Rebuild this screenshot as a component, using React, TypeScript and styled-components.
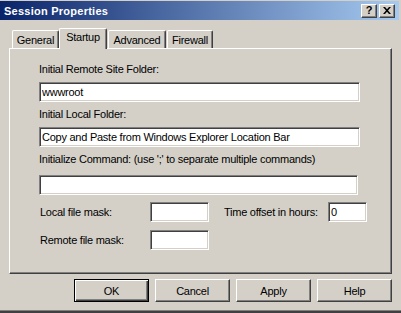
import React from "react";
import styled, { createGlobalStyle } from "styled-components";

const GlobalStyle = createGlobalStyle`
  html, body { margin: 0; padding: 0; background: #d4d0c8; }
  body {
    font-family: "Liberation Sans", Arial, sans-serif;
    font-size: 11px;
    letter-spacing: -0.25px;
    color: #000;
  }
  * { box-sizing: border-box; }
`;

const Window = styled.div`
  width: 401px;
  height: 313px;
  background: #d4d0c8;
  display: flex;
  flex-direction: column;
  padding-top: 1px;
  box-shadow: inset 0 -2px 0 #404040, inset 0 -3px 0 #808080;
`;

const TitleBar = styled.div`
  height: 19px;
  margin-right: 2px;
  padding: 0 4px 0 4px;
  background: linear-gradient(to right, #0a246a, #a6caf0);
  display: flex;
  align-items: center;
`;

const Title = styled.span`
  color: #fff;
  font-weight: bold;
  font-size: 11px;
  letter-spacing: 0.25px;
  flex: 1;
`;

const CaptionButton = styled.div<{ $gap?: number }>`
  width: 16px;
  height: 14px;
  margin-left: ${(p) => p.$gap ?? 0}px;
  background: #d4d0c8;
  border: 1px solid;
  border-color: #fff #404040 #404040 #fff;
  box-shadow: inset -1px -1px 0 #808080;
  display: flex;
  align-items: center;
  justify-content: center;
  font-weight: bold;
  font-size: 11px;
  letter-spacing: 0;
  line-height: 1;
  color: #000;
`;

const TabRow = styled.div`
  margin-top: 8px;
  height: 20px;
  padding-left: 12px;
  display: flex;
  align-items: flex-end;
`;

const Tab = styled.div<{ $w: number; $active?: boolean; $ml?: number }>`
  position: relative;
  z-index: ${(p) => (p.$active ? 2 : 1)};
  width: ${(p) => p.$w}px;
  height: ${(p) => (p.$active ? 21 : 18)}px;
  margin-left: ${(p) => p.$ml ?? 0}px;
  margin-bottom: ${(p) => (p.$active ? -1 : 0)}px;
  padding-top: ${(p) => (p.$active ? 2 : 3)}px;
  background: #d4d0c8;
  border-left: 1px solid #fff;
  border-top: 1px solid #fff;
  border-right: 1px solid #404040;
  border-radius: 2px 2px 0 0;
  box-shadow: inset -1px 0 0 #808080;
  text-align: center;
  line-height: 13px;
`;

const Panel = styled.div`
  margin: 0 9px;
  height: 226px;
  border-left: 1px solid #fff;
  border-top: 1px solid #fff;
  border-right: 1px solid #404040;
  border-bottom: 1px solid #404040;
  box-shadow: inset -1px -1px 0 #808080;
  padding: 14px 0 0 29px;
  display: flex;
  flex-direction: column;
`;

const Label = styled.div<{ $mt?: number }>`
  height: 13px;
  line-height: 13px;
  margin-top: ${(p) => p.$mt ?? 0}px;
  white-space: nowrap;
`;

const TextBox = styled.input<{ $w: number; $mt?: number }>`
  display: block;
  width: ${(p) => p.$w}px;
  height: 20px;
  margin: ${(p) => p.$mt ?? 0}px 0 0 0;
  padding: 0 0 0 2px;
  border: 1px solid;
  border-color: #808080 #fff #fff #808080;
  box-shadow: inset 1px 1px 0 #404040, inset -1px -1px 0 #d4d0c8;
  background: #fff;
  font-family: "Liberation Sans", Arial, sans-serif;
  font-size: 11px;
  letter-spacing: -0.25px;
  color: #000;
  outline: none;
`;

const FieldRow = styled.div<{ $mt: number }>`
  margin-top: ${(p) => p.$mt}px;
  display: flex;
  align-items: center;
`;

const RowLabel = styled.div<{ $w: number; $ml?: number }>`
  width: ${(p) => p.$w}px;
  margin-left: ${(p) => p.$ml ?? 0}px;
  line-height: 13px;
  white-space: nowrap;
  padding-left: 1px;
`;

const ButtonRow = styled.div`
  margin-top: 5px;
  padding-right: 9px;
  display: flex;
  justify-content: flex-end;
  gap: 6px;
`;

const Button = styled.button<{ $default?: boolean }>`
  width: 75px;
  height: 23px;
  margin: 0;
  padding: 0;
  background: #d4d0c8;
  font-family: "Liberation Sans", Arial, sans-serif;
  font-size: 11px;
  letter-spacing: -0.25px;
  color: #000;
  border: 1px solid;
  border-color: ${(p) => (p.$default ? "#000" : "#fff #404040 #404040 #fff")};
  box-shadow: ${(p) =>
    p.$default
      ? "inset 1px 1px 0 #fff, inset -1px -1px 0 #404040, inset -2px -2px 0 #808080"
      : "inset -1px -1px 0 #808080"};
`;

export default function App() {
  return (
    <>
      <GlobalStyle />
      <Window>
        <TitleBar>
          <Title>Session Properties</Title>
          <CaptionButton>?</CaptionButton>
          <CaptionButton $gap={2}>
            <svg width="8" height="7" viewBox="0 0 8 7">
              <path d="M0 0h2l2 2.2L6 0h2L5 3.5 8 7H6L4 4.8 2 7H0l3-3.5z" fill="#000" />
            </svg>
          </CaptionButton>
        </TitleBar>
        <TabRow>
          <Tab $w={47}>General</Tab>
          <Tab $w={48} $active>
            Startup
          </Tab>
          <Tab $w={58} $ml={1}>
            Advanced
          </Tab>
          <Tab $w={46} $ml={1}>
            Firewall
          </Tab>
        </TabRow>
        <Panel>
          <Label>Initial Remote Site Folder:</Label>
          <TextBox $w={321} $mt={6} readOnly defaultValue="wwwroot" />
          <Label $mt={6}>Initial Local Folder:</Label>
          <TextBox
            $w={321}
            $mt={6}
            readOnly
            defaultValue="Copy and Paste from Windows Explorer Location Bar"
          />
          <Label $mt={6}>Initialize Command: (use ';' to separate multiple commands)</Label>
          <TextBox $w={319} $mt={9} readOnly defaultValue="" />
          <FieldRow $mt={7}>
            <RowLabel $w={111}>Local file mask:</RowLabel>
            <TextBox $w={59} readOnly defaultValue="" />
            <RowLabel $w={105} $ml={14}>
              Time offset in hours:
            </RowLabel>
            <TextBox $w={39} readOnly defaultValue="0" />
          </FieldRow>
          <FieldRow $mt={8}>
            <RowLabel $w={111}>Remote file mask:</RowLabel>
            <TextBox $w={59} readOnly defaultValue="" />
          </FieldRow>
        </Panel>
        <ButtonRow>
          <Button $default>OK</Button>
          <Button>Cancel</Button>
          <Button>Apply</Button>
          <Button>Help</Button>
        </ButtonRow>
      </Window>
    </>
  );
}
